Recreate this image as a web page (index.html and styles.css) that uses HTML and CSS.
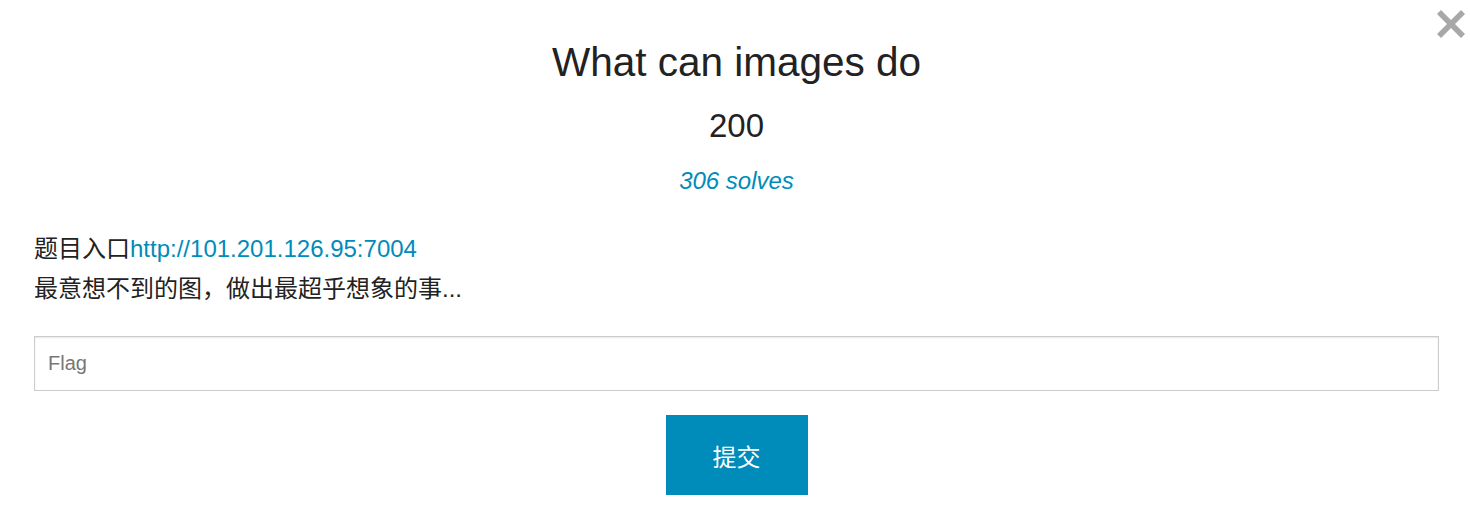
FILE: index.html
```html
<!DOCTYPE html>
<html lang="zh-CN">
<head>
    <meta charset="UTF-8">
    <meta name="viewport" content="width=device-width, initial-scale=1.0">
    <title>What can images do</title>
    <link rel="stylesheet" href="styles.css">
</head>
<body>
    <div class="modal">
        <a class="close-modal" href="#" aria-label="关闭">
            <svg width="30" height="30" viewBox="0 0 30 30">
                <path d="M5 1 L15 11 L25 1 L29 5 L19 15 L29 25 L25 29 L15 19 L5 29 L1 25 L11 15 L1 5 Z" fill="#a8a8a8"/>
            </svg>
        </a>

        <h1 class="chal-name">What can images do</h1>
        <h2 class="chal-value">200</h2>
        <p class="chal-solves">306 solves</p>

        <div class="chal-desc">
            题目入口<a href="http://101.201.126.95:7004">http://101.201.126.95:7004</a><br>
            最意想不到的图，做出最超乎想象的事...
        </div>

        <form class="flag-form" onsubmit="return false;">
            <input type="text" class="flag-input" placeholder="Flag">
            <div class="submit-row">
                <button type="submit" class="submit-btn">提交</button>
            </div>
        </form>
    </div>
</body>
</html>
```

FILE: styles.css
```css
body {
    margin: 0;
    background: #ffffff;
    font-family: "Liberation Sans", Arial, "Noto Sans CJK SC", sans-serif;
    color: #222222;
}

.modal {
    position: relative;
    padding: 38px 31px 0 34px;
}

.close-modal {
    position: absolute;
    top: 9px;
    right: 4px;
    display: block;
    line-height: 0;
}

.chal-name {
    margin: 0;
    font-size: 40.5px;
    line-height: 48px;
    font-weight: normal;
    text-align: center;
}

.chal-value {
    margin: 20px 0 0;
    font-size: 33px;
    line-height: 40px;
    font-weight: normal;
    text-align: center;
}

.chal-solves {
    margin: 20px 0 0;
    font-size: 24px;
    line-height: 29px;
    font-style: italic;
    color: #008cba;
    text-align: center;
}

.chal-desc {
    margin-top: 34px;
    font-size: 24px;
    line-height: 40px;
    color: #222222;
}

.chal-desc a {
    color: #008cba;
    text-decoration: none;
}

.flag-form {
    margin-top: 27px;
}

.flag-input {
    display: block;
    width: 100%;
    height: 55px;
    box-sizing: border-box;
    padding: 0 13px;
    border: 1px solid #cccccc;
    box-shadow: inset 0 1px 2px rgba(0, 0, 0, 0.1);
    font-family: "Liberation Sans", Arial, sans-serif;
    font-size: 20px;
    color: #222222;
    outline: none;
}

.flag-input::placeholder {
    color: #777777;
}

.submit-row {
    display: flex;
    justify-content: center;
    margin-top: 24px;
}

.submit-btn {
    width: 142px;
    height: 80px;
    border: none;
    background-color: #008cba;
    color: #ffffff;
    font-family: "Liberation Sans", Arial, "Noto Sans CJK SC", sans-serif;
    font-size: 24px;
    cursor: pointer;
}

.submit-btn:hover {
    background-color: #007095;
}
```
